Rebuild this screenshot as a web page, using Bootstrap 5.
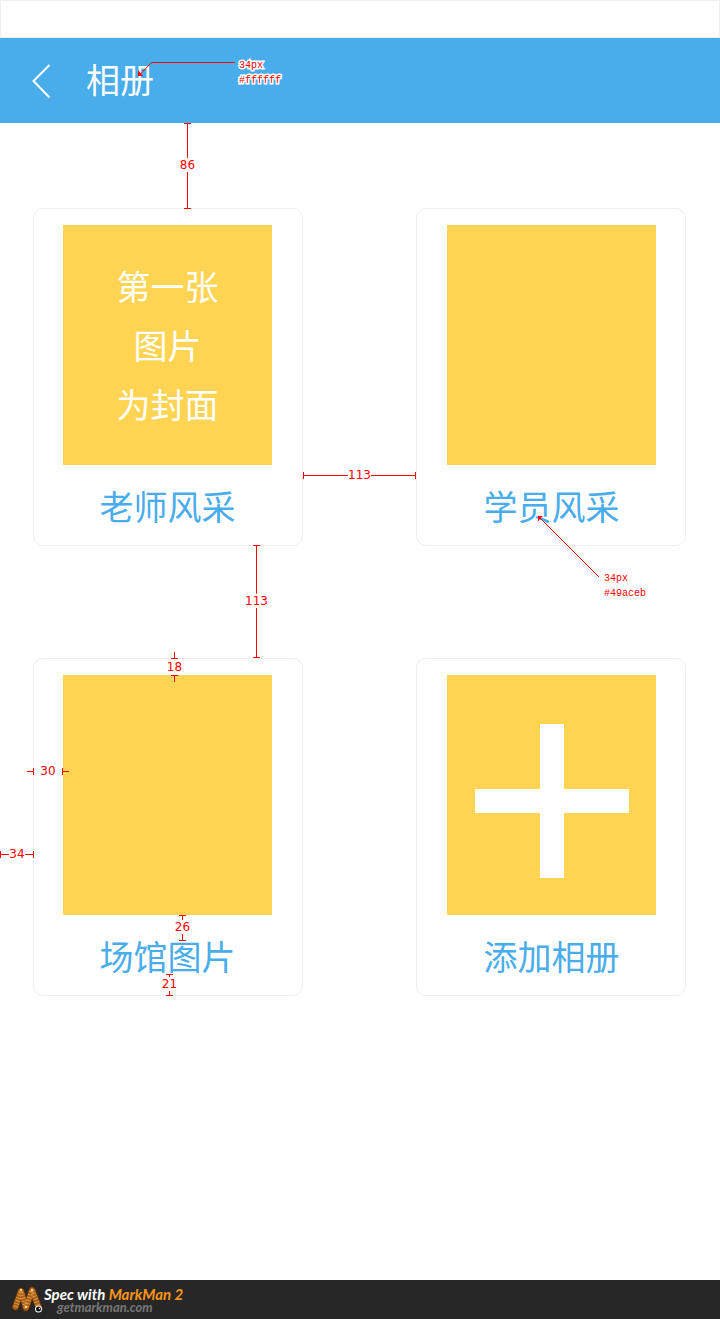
<!DOCTYPE html>
<html lang="zh-CN">
<head>
<meta charset="utf-8">
<meta name="viewport" content="width=device-width, initial-scale=1">
<title>相册</title>
<link href="https://cdn.jsdelivr.net/npm/bootstrap@5.3.0/dist/css/bootstrap.min.css" rel="stylesheet">
<style>
  :root { --sky: #49aceb; --sun: #ffd452; --spec: #ff0000; }
  body { font-family: "Noto Sans CJK SC", sans-serif; background: #fff; }
  .status-strip { height: 38px; border: 1px solid #efefef; }
  .app-header { height: 85px; background: var(--sky); padding-left: 32px; gap: 34px; }
  .app-title { font-size: 34px; font-weight: 400; line-height: 34px; padding-bottom: 4px; }
  .album-grid { display: grid; grid-template-columns: 1fr 1fr; gap: 112px 113px; padding: 85px 34px 85px 33px; }
  .album-card { height: 338px; padding: 16px 30px 0 29px; border: 1px solid #efefef; border-radius: 10px; }
  .album-cell:nth-child(even) .album-card { padding: 16px 29px 0 30px; }
  .album-cover { height: 240px; background: var(--sun); font-size: 34px; line-height: 59px; padding-bottom: 2px; }
  .cover-add { padding: 12px 0 0; }
  .album-name { font-size: 34px; line-height: 34px; margin-top: 24px; color: var(--sky); white-space: nowrap; }

  /* measurement marks laid over the screen */
  .dim { position: absolute; display: flex; align-items: center; justify-content: space-between; color: var(--spec);
         font: 12px/14px "DejaVu Sans", sans-serif; pointer-events: none; --ink: linear-gradient(var(--spec), var(--spec)); }
  .dim::before, .dim::after { content: ""; flex: 1 1 0px; background-repeat: no-repeat; background-image: var(--ink), var(--ink); }
  .dim-v { flex-direction: column; width: 25px; }
  .dim-v::before, .dim-v::after { width: 7px; background-size: 7px 1px, 1px 100%; }
  .dim-v::before { background-position: top, center; }
  .dim-v::after { background-position: bottom, center; flex-basis: 2px; }
  .dim-h { height: 14px; }
  .dim-h::before, .dim-h::after { height: 7px; background-size: 1px 7px, 100% 1px; }
  .dim-h::before { background-position: left, center; }
  .dim-h::after { background-position: right, center; }
  .dim-out::before, .dim-out::after { flex: 0 0 7px; }
  .dim-v.dim-out::before { background-position: bottom, center; }
  .dim-v.dim-out::after { background-position: top, center; }
  .dim-h.dim-out::before { background-position: right, center; }
  .dim-h.dim-out::after { background-position: left, center; }

  .callout { position: absolute; display: flex; pointer-events: none; color: var(--spec); font: 10px/15px "Liberation Mono", monospace; }
  .callout svg { flex: none; }
  .callout-text { -webkit-text-stroke: 3px #fff; paint-order: stroke fill; }

  .spec-footer { height: 39px; background: #272727; padding-left: 11px; font-family: Lato, sans-serif; font-style: italic; font-weight: 700; }
  .brand-line { font-size: 15px; line-height: 14px; color: #fff; }
  .brand-line span { color: #ff9517; }
  .site-line { font-size: 13px; line-height: 12px; color: #777; padding-left: 13px; }
</style>
</head>
<body class="d-flex flex-column min-vh-100">
<div class="status-strip"></div>
<header class="app-header d-flex align-items-center position-relative text-white">
  <a href="#" class="d-flex text-white" aria-label="返回">
    <svg width="20" height="36" viewBox="0 0 20 36" fill="none" stroke="currentColor" stroke-width="2"><path d="M17.500 2 1.500 18 17.500 34.500"/></svg>
  </a>
  <h1 class="app-title m-0">相册</h1>
  <div class="callout" style="left:136px;top:20px">
    <svg width="103" height="24" viewBox="0 0 103 24"><path d="M3 17.500 15.500 4.500H99" fill="none" stroke="red"/><path d="M2 12v6h5z" fill="red"/></svg>
    <div class="callout-text">34px<br>#ffffff</div>
  </div>
</header>

<main class="album-grid">
  <div class="album-cell position-relative">
    <a href="#" class="album-card d-block text-decoration-none text-center">
      <div class="album-cover text-white d-flex flex-column justify-content-center"><span>第一张</span><span>图片</span><span>为封面</span></div>
      <div class="album-name">老师风采</div>
    </a>
    <div class="dim dim-v" style="left:142px;top:-85px;height:86px">86</div>
    <div class="dim dim-v" style="left:211px;top:337px;height:113px">113</div>
    <div class="dim dim-h" style="left:100%;top:260px;width:113px">113</div>
  </div>
  <div class="album-cell position-relative">
    <a href="#" class="album-card d-block text-decoration-none text-center">
      <div class="album-cover"></div>
      <div class="album-name">学员风采</div>
    </a>
    <div class="callout align-items-end" style="left:121px;top:307px">
      <svg width="67" height="86" viewBox="0 0 67 86"><path d="M1.500 1.500 62 62" fill="none" stroke="red"/><path d="M1 1h5L1 6z" fill="red"/></svg>
      <div class="callout-text">34px<br>#49aceb</div>
    </div>
  </div>
  <div class="album-cell position-relative">
    <a href="#" class="album-card d-block text-decoration-none text-center">
      <div class="album-cover"></div>
      <div class="album-name">场馆图片</div>
    </a>
    <div class="dim dim-v dim-out" style="left:129px;top:-6px;height:30px">18</div>
    <div class="dim dim-h dim-out" style="left:-6px;top:106px;width:42px">30</div>
    <div class="dim dim-h" style="left:-33px;top:189px;width:34px">34</div>
    <div class="dim dim-v" style="left:137px;top:257px;height:26px">26</div>
    <div class="dim dim-v" style="left:124px;top:316px;height:22px">21</div>
  </div>
  <div class="album-cell position-relative">
    <a href="#" class="album-card d-block text-decoration-none text-center">
      <div class="album-cover cover-add d-flex align-items-center justify-content-center">
        <svg width="155" height="154" viewBox="0 0 155 154" fill="#fff" aria-hidden="true"><path d="M66 0h24v65h65v24H90v65H66V89H1V65h65z"/></svg>
      </div>
      <div class="album-name">添加相册</div>
    </a>
  </div>
</main>

<footer class="spec-footer d-flex align-items-center mt-auto">
  <svg width="33" height="31" viewBox="0 0 33 31" fill="none" stroke-linecap="round" stroke-linejoin="round" aria-hidden="true">
    <path d="M4.500 23 10 7 15 24 21 6 28 24" stroke="#5a3008" stroke-width="7"/>
    <path d="M4.500 23 10 7 15 24 21 6 28 24" stroke="#a85f1b" stroke-width="5.500"/>
    <path d="M4.500 23 10 7 15 24 21 6 28 24" stroke="#d9963f" stroke-width="5" stroke-linecap="butt" stroke-dasharray="1 2"/>
    <circle cx="10" cy="6" r="1.200" fill="#ffe28d"/><circle cx="21" cy="6" r="1.200" fill="#ffe28d"/><circle cx="15" cy="23" r="1.200" fill="#ffe28d"/>
    <circle cx="27.500" cy="25" r="3.500" fill="#fff"/><circle cx="27.500" cy="25" r="2.500" fill="#111"/><circle cx="28.500" cy="24.500" r=".8" fill="#fff"/>
  </svg>
  <div>
    <div class="brand-line">Spec with <span>MarkMan 2</span></div>
    <div class="site-line">getmarkman.com</div>
  </div>
</footer>
<script src="https://cdn.jsdelivr.net/npm/bootstrap@5.3.0/dist/js/bootstrap.bundle.min.js"></script>
</body>
</html>
